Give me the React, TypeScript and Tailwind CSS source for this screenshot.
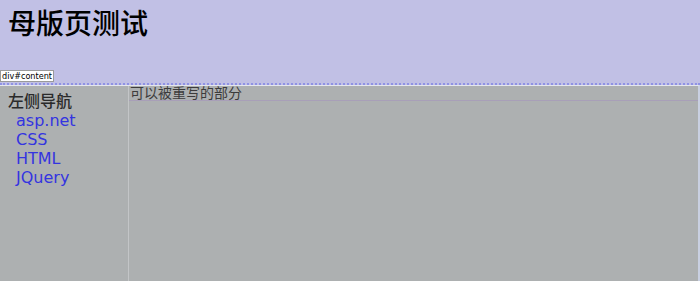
export default function App() {
  const links = ['asp.net', 'CSS', 'HTML', 'JQuery']

  return (
    <div className="w-[700px] h-[281px] overflow-hidden flex flex-col bg-[#adb0b1] font-['DejaVu_Sans','Noto_Sans_CJK_SC',sans-serif]">
      {/* Header */}
      <div className="relative h-[85px] shrink-0 bg-[#c1c0e5] border-b-2 border-dotted border-[#8f92e4]">
        <h1 className="pl-[8px] pt-[4px] text-[28px] leading-[36px] font-medium text-black font-['Noto_Sans_CJK_SC',serif]">
          母版页测试
        </h1>
        <span className="absolute left-0 top-[70px] h-[12px] px-[1px] bg-white border border-[#9a9a9a] text-[9px] leading-[10px] text-black font-['DejaVu_Sans_Condensed','DejaVu_Sans',sans-serif]">
          div#content
        </span>
      </div>

      {/* Body */}
      <div className="flex flex-1 border-t border-[#e4e6ee] border-r-2 border-r-[#c9d0e2]">
        <div className="w-[129px] shrink-0 border-r border-[#c3c5c7] pl-[8px] pt-[4px]">
          <div className="text-[16px] leading-[20px] font-medium text-[#2a2a2a] font-['Noto_Sans_CJK_SC',sans-serif]">
            左侧导航
          </div>
          <ul className="pl-[8px] mt-[1px]">
            {links.map(l => (
              <li key={l} className="text-[16px] leading-[19px] text-[#3434e0]">
                {l}
              </li>
            ))}
          </ul>
        </div>
        <div className="flex-1">
          <div className="h-[15px] border-b border-[#a89fb8] pl-[1px] text-[14px] leading-[13px] text-[#3c3c3c] font-['Noto_Sans_CJK_SC',sans-serif]">
            可以被重写的部分
          </div>
        </div>
      </div>
    </div>
  )
}
